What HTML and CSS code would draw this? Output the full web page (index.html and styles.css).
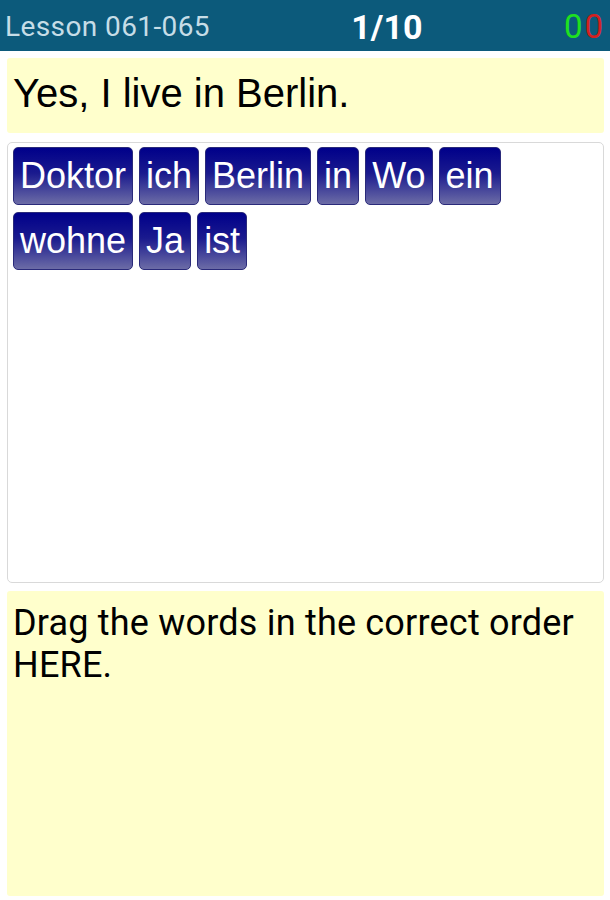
FILE: index.html
```html
<!DOCTYPE html>
<html>
<head>
<meta charset="utf-8">
<link rel="stylesheet" href="styles.css">
</head>
<body>
<div class="header">
  <div class="lesson">Lesson 061-065</div>
  <div class="progress">1/10</div>
  <div class="score"><span class="good">0</span><span class="bad">0</span></div>
</div>
<div class="content">
  <div class="prompt">Yes, I live in Berlin.</div>
  <div class="pool">
    <span class="tile">Doktor</span>
    <span class="tile">ich</span>
    <span class="tile">Berlin</span>
    <span class="tile">in</span>
    <span class="tile">Wo</span>
    <span class="tile">ein</span>
    <span class="tile">wohne</span>
    <span class="tile">Ja</span>
    <span class="tile">ist</span>
  </div>
  <div class="drop">Drag the words in the correct order HERE.</div>
</div>
</body>
</html>
```
FILE: styles.css
```css
html, body {
  margin: 0;
  padding: 0;
  background: #ffffff;
}
body {
  width: 610px;
  height: 900px;
  overflow: hidden;
}
.header {
  height: 51px;
  background: #0c5a7b;
  display: flex;
  justify-content: space-between;
  align-items: center;
  padding: 2px 5px 0 5px;
  box-sizing: border-box;
  font-family: Roboto, "Liberation Sans", sans-serif;
}
.lesson {
  color: #c6dde7;
  font-size: 28px;
  letter-spacing: 0.4px;
}
.progress {
  color: #ffffff;
  font-weight: bold;
  font-size: 34px;
}
.score {
  font-size: 33px;
  letter-spacing: 2px;
}
.good { color: #1fe01f; }
.bad { color: #d42020; }
.content {
  padding: 7px 6px 4px 7px;
  display: flex;
  flex-direction: column;
}
.prompt {
  background: #ffffcc;
  height: 75px;
  box-sizing: border-box;
  padding: 12px 6px 0 6px;
  font-family: "Liberation Sans", Arial, sans-serif;
  font-size: 40px;
  line-height: 46px;
  color: #000;
  border-radius: 3px;
}
.pool {
  margin-top: 9px;
  height: 441px;
  box-sizing: border-box;
  border: 1px solid #d9d9d9;
  border-radius: 5px;
  background: #fff;
  padding: 4px 5px;
  display: flex;
  flex-wrap: wrap;
  align-content: flex-start;
  gap: 7px 6px;
}
.tile {
  display: block;
  height: 58px;
  box-sizing: border-box;
  padding: 0 6px;
  border: 1px solid #2a2a7a;
  border-radius: 5px;
  background: linear-gradient(to bottom, #00008a 0%, #1a1a8e 45%, #6c6ca6 100%);
  color: #ffffff;
  font-family: "Liberation Sans", Arial, sans-serif;
  font-size: 36px;
  line-height: 56px;
}
.drop {
  margin-top: 8px;
  height: 305px;
  box-sizing: border-box;
  background: #ffffcc;
  border-radius: 3px;
  padding: 11px 6px 0 6px;
  font-family: Roboto, "Liberation Sans", sans-serif;
  font-size: 36px;
  letter-spacing: 0.2px;
  line-height: 42px;
  color: #000;
}
```
